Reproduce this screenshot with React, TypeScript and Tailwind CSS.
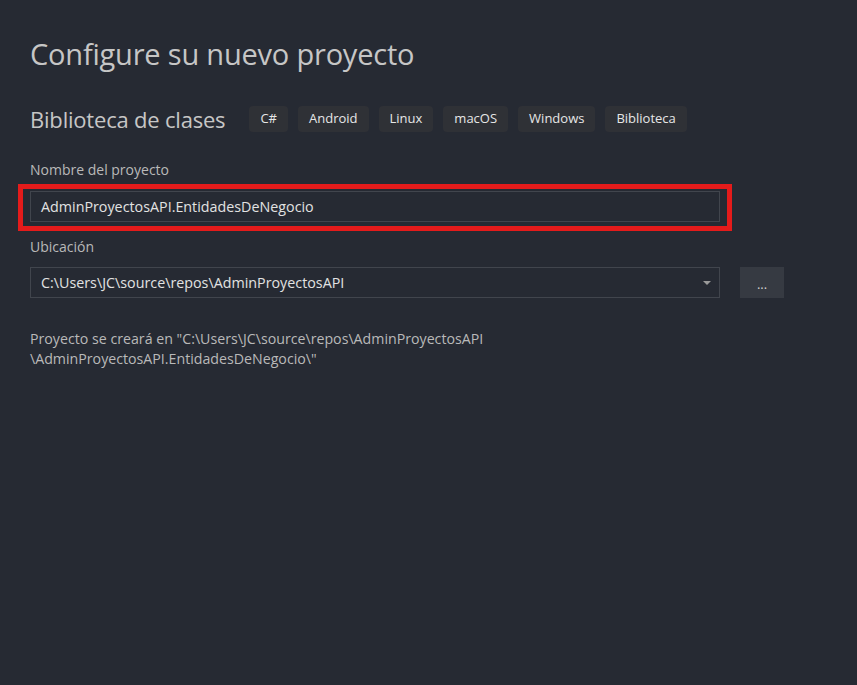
const tags = ["C#", "Android", "Linux", "macOS", "Windows", "Biblioteca"];

const App = () => {
  return (
    <div className="w-[857px] h-[685px] bg-[#262a33] text-[#c8c8c8] font-['Open_Sans',sans-serif] pt-[34px] pl-[30px] overflow-hidden">
      <h1 className="text-[29px] leading-[40px] text-[#c6c6c6] tracking-[-0.2px]">Configure su nuevo proyecto</h1>

      <div className="flex items-center mt-[32px] h-[26px]">
        <span className="text-[22px] text-[#c6c6c6] mr-[24px] tracking-[-0.2px]">Biblioteca de clases</span>
        <ul className="flex gap-[10px]">
          {tags.map((tag) => (
            <li key={tag} className="h-[26px] px-[11px] flex items-center rounded-[4px] bg-[#2f3136] text-[13px] text-[#e6e6e6]">
              {tag}
            </li>
          ))}
        </ul>
      </div>

      <p className="mt-[28px] text-[14px] leading-[20px] text-[#b9b9b9]">Nombre del proyecto</p>
      <div className="relative mt-[11px] w-[690px]">
        <div className="h-[31px] border border-[#41454d] flex items-center px-[10px] text-[14.3px] text-[#e2e2e2]">
          AdminProyectosAPI.EntidadesDeNegocio
        </div>
        <div className="absolute left-[-12px] top-[-7px] w-[714px] h-[47px] border-[5px] border-[#e41b1b]"></div>
      </div>

      <p className="mt-[15px] text-[14px] leading-[20px] text-[#b9b9b9]">Ubicación</p>
      <div className="flex mt-[10px] gap-[20px]">
        <div className="w-[690px] h-[31px] border border-[#41454d] flex items-center justify-between pl-[10px] pr-[8px] text-[14.3px] text-[#e2e2e2]">
          <span>C:\Users\JC\source\repos\AdminProyectosAPI</span>
          <svg width="8" height="4" viewBox="0 0 8 4"><path d="M0 0h8L4 4z" fill="#9a9a9a" /></svg>
        </div>
        <button className="w-[44px] h-[31px] bg-[#363a42] text-[#d0d0d0] text-[13px] leading-none pt-[4px]">...</button>
      </div>

      <p className="mt-[31px] text-[14.2px] leading-[20px] text-[#b9b9b9]">
        Proyecto se creará en "C:\Users\JC\source\repos\AdminProyectosAPI
        <br />
        \AdminProyectosAPI.EntidadesDeNegocio\"
      </p>
    </div>
  );
};

export default App;
